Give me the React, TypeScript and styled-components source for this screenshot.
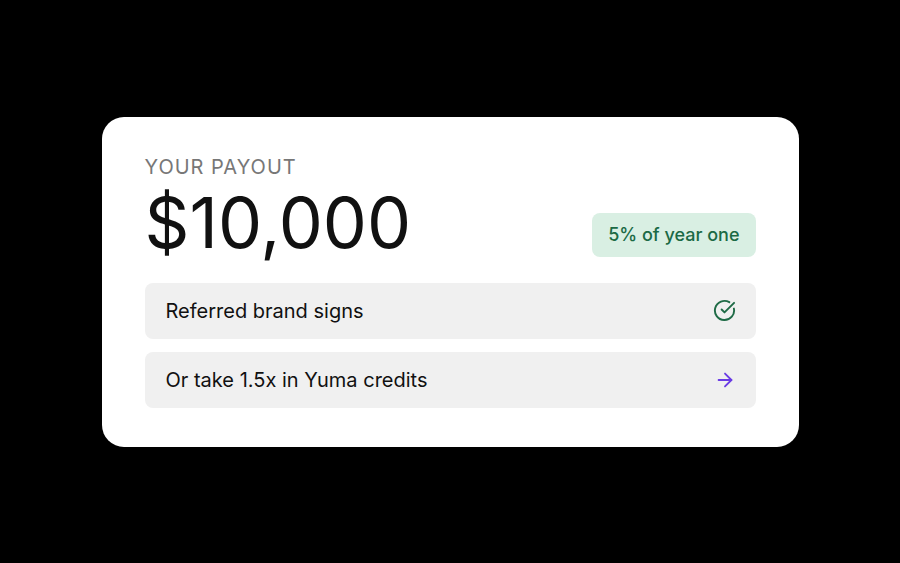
import styled, { createGlobalStyle } from "styled-components";
import { ArrowRight, CircleCheckBig } from "lucide-react";

const GlobalStyle = createGlobalStyle`
  html, body {
    margin: 0;
    padding: 0;
    background: #000;
  }
  body {
    font-family: Inter, "Noto Sans", sans-serif;
  }
`;

export default function App() {
  return (
    <>
      <GlobalStyle />
      <Page>
        <Card>
          <Header>
            <div>
              <Label>YOUR PAYOUT</Label>
              <Amount>$10,000</Amount>
            </div>
            <Badge>5% of year one</Badge>
          </Header>
          <Rows>
            <Row>
              <span>Referred brand signs</span>
              <CircleCheckBig size={23} color="#1f6b46" strokeWidth={2} />
            </Row>
            <Row>
              <span>Or take 1.5x in Yuma credits</span>
              <ArrowRight size={22} color="#6a3be4" strokeWidth={2} />
            </Row>
          </Rows>
        </Card>
      </Page>
    </>
  );
}

const Page = styled.div`
  width: 900px;
  height: 563px;
  display: flex;
  align-items: center;
  justify-content: center;
  background: #000;
`;

const Card = styled.div`
  width: 697px;
  height: 330px;
  box-sizing: border-box;
  background: #fff;
  border-radius: 22px;
  padding: 36px 43px 38px;
  display: flex;
  flex-direction: column;
`;

const Header = styled.div`
  display: flex;
  justify-content: space-between;
  align-items: flex-end;
  margin-bottom: 18px;
`;

const Label = styled.div`
  font-size: 20px;
  line-height: 28px;
  letter-spacing: 1px;
  color: #777;
`;

const Amount = styled.div`
  font-size: 70px;
  line-height: 84px;
  color: #111;
`;

const Badge = styled.div`
  background: #d9efe3;
  color: #1b6a45;
  font-size: 18px;
  font-weight: 500;
  padding: 0 16px;
  height: 44px;
  display: flex;
  align-items: center;
  border-radius: 8px;
  margin-bottom: 8px;
`;

const Rows = styled.div`
  display: flex;
  flex-direction: column;
  gap: 13px;
`;

const Row = styled.div`
  height: 56px;
  background: #f0f0f0;
  border-radius: 8px;
  padding: 0 20px 0 21px;
  display: flex;
  align-items: center;
  justify-content: space-between;
  font-size: 20px;
  color: #111;
`;
